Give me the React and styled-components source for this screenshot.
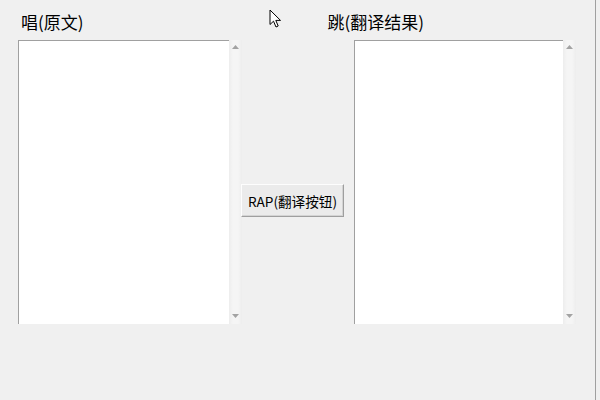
import React from "react";
import styled, { createGlobalStyle } from "styled-components";

const Global = createGlobalStyle`
  html, body { margin: 0; padding: 0; background: #f0f0f0; }
  body { font-family: "Noto Sans CJK SC", "Noto Sans", sans-serif; }
`;

const Window = styled.div`
  position: relative;
  width: 596px;
  height: 400px;
  box-sizing: border-box;
  background: #f0f0f0;
  border-right: 1px solid #a0a0a0;
  padding-top: 10px;
`;

const Header = styled.div`
  display: flex;
  height: 24px;
  margin-bottom: 6px;
`;

const Label = styled.div`
  font-size: 17px;
  line-height: 24px;
  color: #000;
  margin-left: ${(p) => p.$offset}px;
  white-space: nowrap;
`;

const Main = styled.div`
  display: flex;
  align-items: flex-start;
`;

const TextBox = styled.div`
  display: flex;
  width: ${(p) => p.$width}px;
  height: 284px;
  margin-left: ${(p) => p.$offset}px;
`;

const Area = styled.textarea`
  flex: 1;
  margin: 0;
  padding: 2px;
  resize: none;
  border: none;
  border-top: 1px solid #a0a0a0;
  border-left: 1px solid #a0a0a0;
  background: #fff;
  outline: none;
  font-family: inherit;
  font-size: 13px;
`;

const Scroll = styled.div`
  width: 13px;
  display: flex;
  flex-direction: column;
  justify-content: space-between;
  align-items: center;
  background: linear-gradient(to right, #ededed, #f5f5f5 30%, #f5f5f5 70%, #ededed);
  padding: 5px 0 6px;
  box-sizing: border-box;
`;

const Arrow = ({ down }) => (
  <svg width="7" height="4" viewBox="0 0 7 4">
    <path d={down ? "M0 0H7L3.5 4Z" : "M0 4H7L3.5 0Z"} fill="#a3a3a3" />
  </svg>
);

const Button = styled.button`
  margin: 144px 0 0 -1px;
  width: 103px;
  height: 33px;
  box-sizing: border-box;
  padding: 0;
  font-family: inherit;
  font-size: 13.6px;
  color: #000;
  background: #ebebeb;
  border: 1px solid;
  border-color: #fdfdfd #9f9f9f #9f9f9f #fdfdfd;
  box-shadow: inset -1px -1px 0 #d4d4d4;
  white-space: nowrap;
`;

const Cursor = styled.svg`
  position: absolute;
  left: 269px;
  top: 9px;
`;

export default function App() {
  return (
    <>
      <Global />
      <Window>
        <Header>
          <Label $offset={21}>唱(原文)</Label>
          <Label $offset={244}>跳(翻译结果)</Label>
        </Header>
        <Main>
          <TextBox $width={224} $offset={18}>
            <Area />
            <Scroll>
              <Arrow />
              <Arrow down />
            </Scroll>
          </TextBox>
          <Button>RAP(翻译按钮)</Button>
          <TextBox $width={222} $offset={10}>
            <Area />
            <Scroll>
              <Arrow />
              <Arrow down />
            </Scroll>
          </TextBox>
        </Main>
        <Cursor width="13" height="19" viewBox="0 0 13 19">
          <path d="M1 1V15.5L4.5 12.2L7 18L9.2 17L6.8 11.4H11.5Z" fill="#fff" stroke="#000" strokeWidth="1" strokeLinejoin="round" />
        </Cursor>
      </Window>
    </>
  );
}
